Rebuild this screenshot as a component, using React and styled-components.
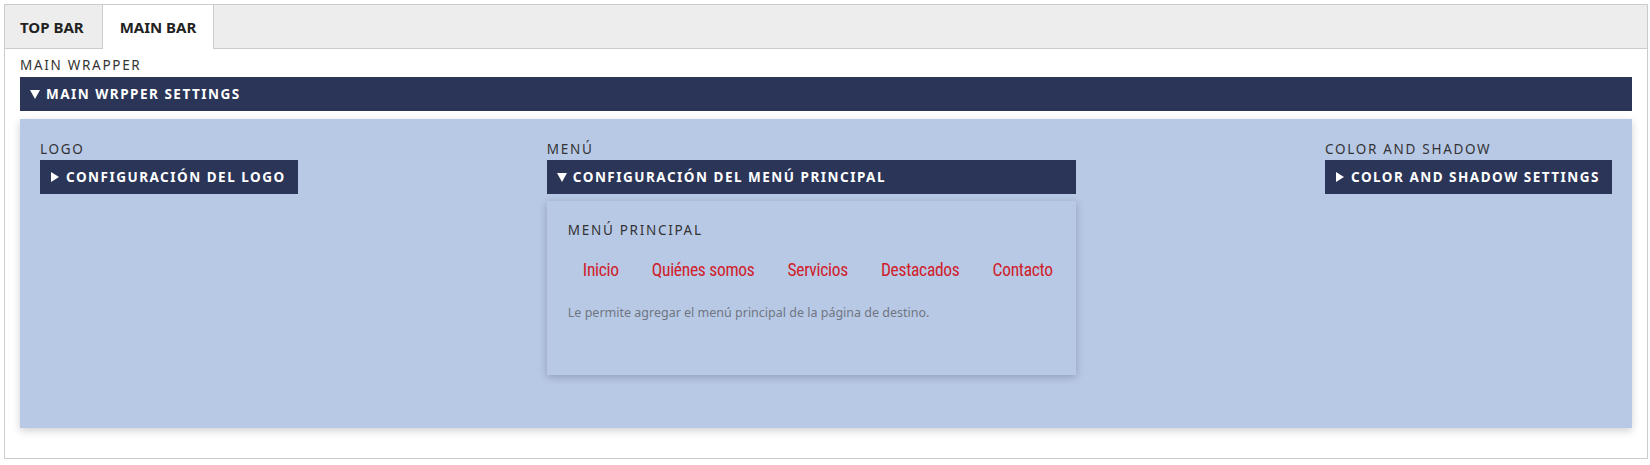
import styled, { createGlobalStyle } from 'styled-components'

const GlobalStyle = createGlobalStyle`
    html, body {
        margin: 0;
        padding: 0;
        background: #fff;
    }
    body {
        padding: 4px 2px 5px 4px;
        font-family: "Noto Sans", "Open Sans", Roboto, sans-serif;
        color: #333;
    }
`

const Frame = styled.div`
    border: 1px solid #ccc;
    height: 455px;
    box-sizing: border-box;
`

const TabBar = styled.div`
    display: flex;
    height: 43px;
    background: #ededed;
    border-bottom: 1px solid #ccc;
`

const Tab = styled.div`
    display: flex;
    align-items: center;
    padding: 0 17px;
    font-size: 15px;
    font-weight: 700;
    color: #222;
    background: ${p => (p.$active ? '#fff' : 'transparent')};
    border-left: 1px solid ${p => (p.$active ? '#ccc' : 'transparent')};
    border-right: 1px solid ${p => (p.$active ? '#ccc' : 'transparent')};
    margin-bottom: ${p => (p.$active ? '-1px' : '0')};
    &:first-child {
        border-left: none;
        padding-left: 15px;
    }
`

const Body = styled.div`
    padding: 7px 15px 0 15px;
`

const Label = styled.div`
    font-size: 13.5px;
    line-height: 18px;
    letter-spacing: 1.7px;
    text-transform: uppercase;
    color: #333;
    margin-bottom: ${p => p.$gap || 2}px;
`

const Toggle = styled.div`
    display: flex;
    align-items: center;
    gap: 6px;
    height: 34px;
    padding: 0 12px 0 10px;
    background: #2a3558;
    color: #fff;
    font-size: 13.5px;
    font-weight: 700;
    letter-spacing: 1.5px;
    text-transform: uppercase;
    white-space: nowrap;
    width: ${p => (p.$full ? 'auto' : 'fit-content')};
    box-sizing: border-box;

    svg {
        flex: none;
        fill: #fff;
    }
`

const Arrow = ({ open }) =>
    open ? (
        <svg width='10' height='9' viewBox='0 0 10 9'>
            <path d='M0 0 H10 L5 9 Z' />
        </svg>
    ) : (
        <svg width='10' height='10' viewBox='0 0 10 10'>
            <path d='M1 0 L9 5 L1 10 Z' />
        </svg>
    )

const Panel = styled.div`
    margin-top: 8px;
    background: #b8c9e6;
    box-shadow: 0 3px 8px rgba(0, 0, 0, 0.18);
    height: 309px;
    box-sizing: border-box;
    padding: 21px 20px 0 20px;
    display: flex;
    justify-content: space-between;
    align-items: flex-start;
`

const Column = styled.div`
    display: flex;
    flex-direction: column;
    width: ${p => p.$width || 'auto'};
`

const Dropdown = styled.div`
    margin-top: 7px;
    height: 174px;
    box-sizing: border-box;
    padding: 20px 20px 0 21px;
    background: #b8c9e6;
    box-shadow: 0 2px 8px rgba(0, 0, 0, 0.22);
`

const MenuList = styled.ul`
    list-style: none;
    margin: 20px 0 0 0;
    padding: 0;
    display: flex;
    white-space: nowrap;
`

const MenuItem = styled.li`
    padding: 0 16px 0 15px;
    font-family: Roboto, "Liberation Sans", sans-serif;
    font-stretch: condensed;
    font-size: 17.5px;
    line-height: 22px;
    letter-spacing: -0.3px;
    color: #d0202a;
    & + & {
        padding-left: 17px;
    }
`

const Description = styled.p`
    margin: 23px 0 0 0;
    font-size: 12.5px;
    color: #6f7682;
    white-space: nowrap;
`

const menuItems = ['Inicio', 'Quiénes somos', 'Servicios', 'Destacados', 'Contacto']

export default function App() {
    return (
        <>
            <GlobalStyle />
            <Frame>
                <TabBar>
                    <Tab>TOP BAR</Tab>
                    <Tab $active>MAIN BAR</Tab>
                </TabBar>
                <Body>
                    <Label $gap={3}>Main wrapper</Label>
                    <Toggle $full>
                        <Arrow open />
                        Main wrpper settings
                    </Toggle>
                    <Panel>
                        <Column>
                            <Label>Logo</Label>
                            <Toggle>
                                <Arrow />
                                Configuración del logo
                            </Toggle>
                        </Column>
                        <Column $width='529px'>
                            <Label>Menú</Label>
                            <Toggle $full>
                                <Arrow open />
                                Configuración del menú principal
                            </Toggle>
                            <Dropdown>
                                <Label>Menú principal</Label>
                                <MenuList>
                                    {menuItems.map(item => (
                                        <MenuItem key={item}>{item}</MenuItem>
                                    ))}
                                </MenuList>
                                <Description>
                                    Le permite agregar el menú principal de la página de destino.
                                </Description>
                            </Dropdown>
                        </Column>
                        <Column>
                            <Label>Color and shadow</Label>
                            <Toggle>
                                <Arrow />
                                Color and shadow settings
                            </Toggle>
                        </Column>
                    </Panel>
                </Body>
            </Frame>
        </>
    )
}
